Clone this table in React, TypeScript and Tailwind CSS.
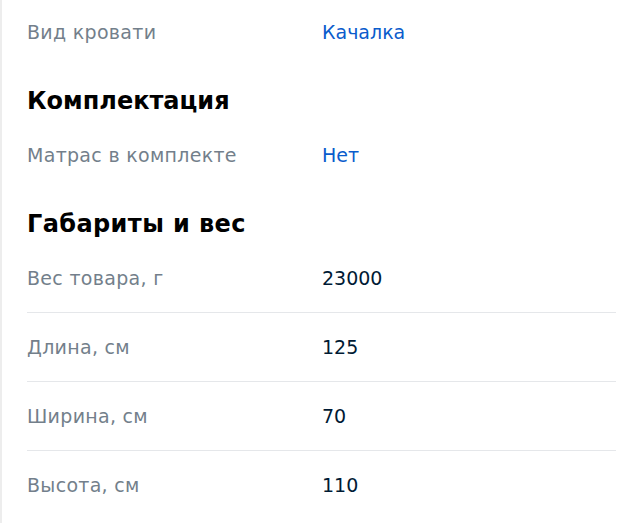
const font = { fontFamily: '"DejaVu Sans", sans-serif' }

function Row({ label, value, link, divider }: { label: string; value: string; link?: boolean; divider?: boolean }) {
    return (
        <div className={`flex items-center h-[69px] ${divider ? 'border-b border-[#e5e7ea]' : ''}`}>
            <div className="w-[295px] shrink-0 text-[19px] tracking-[0.3px] text-[#737f8b]">{label}</div>
            <div className={`text-[19px] ${link ? 'text-[#0a5ccc]' : 'text-[#001a34]'}`}>{value}</div>
        </div>
    )
}

export default function App() {
    return (
        <div className="w-[640px] h-[523px] bg-white border-l-2 border-[#ededed] overflow-hidden" style={font}>
            <div className="pl-[25px] pr-[24px]">
                <div className="flex items-center h-[64px]">
                    <div className="w-[295px] shrink-0 text-[19px] tracking-[0.3px] text-[#737f8b]">Вид кровати</div>
                    <div className="text-[19px] text-[#0a5ccc]">Качалка</div>
                </div>
                <h2 className="flex items-center h-[40px] mt-[17px] text-[24px] font-bold text-black">Комплектация</h2>
                <div className="flex items-center h-[44px] mt-[12px]">
                    <div className="w-[295px] shrink-0 text-[19px] tracking-[0.3px] text-[#737f8b]">Матрас в комплекте</div>
                    <div className="text-[19px] text-[#0a5ccc]">Нет</div>
                </div>
                <h2 className="flex items-center h-[40px] mt-[27px] text-[24px] font-bold tracking-[0.4px] text-black">Габариты и вес</h2>
                <Row label="Вес товара, г" value="23000" divider />
                <Row label="Длина, см" value="125" divider />
                <Row label="Ширина, см" value="70" divider />
                <Row label="Высота, см" value="110" />
            </div>
        </div>
    )
}
